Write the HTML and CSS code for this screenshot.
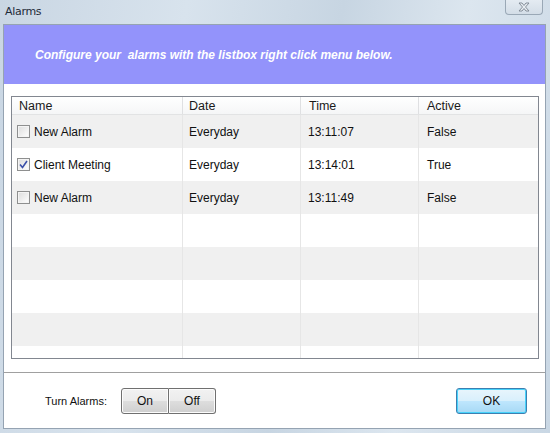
FILE: index.html
```html
<!DOCTYPE html>
<html>
<head>
<meta charset="utf-8">
<link rel="stylesheet" href="styles.css">
</head>
<body>
<div class="window">
  <div class="titlebar">
    <span class="title">Alarms</span>
    <div class="close">
      <svg width="14" height="10" viewBox="0 0 14 10"><path d="M2 1 L5 1 L7 3.5 L9 1 L12 1 L8.5 5 L12 9 L9 9 L7 6.5 L5 9 L2 9 L5.5 5 Z" fill="#e9eef3" stroke="#7a8490" stroke-width="0.9" stroke-linejoin="round"/></svg>
    </div>
  </div>
  <div class="client">
    <div class="banner">Configure your&nbsp; alarms with the listbox right click menu below.</div>
    <div class="listarea">
      <div class="list">
        <div class="row head">
          <div class="cell c1">Name</div>
          <div class="cell c2">Date</div>
          <div class="cell c3">Time</div>
          <div class="cell c4">Active</div>
        </div>
        <div class="row alt">
          <div class="cell c1"><span class="cb"></span>New Alarm</div>
          <div class="cell c2">Everyday</div>
          <div class="cell c3">13:11:07</div>
          <div class="cell c4">False</div>
        </div>
        <div class="row">
          <div class="cell c1"><span class="cb checked"><svg width="9" height="9" viewBox="0 0 9 9"><path d="M1 4.5 L3.5 7.5 L8 1" fill="none" stroke="#3a4fa8" stroke-width="1.6"/></svg></span>Client Meeting</div>
          <div class="cell c2">Everyday</div>
          <div class="cell c3">13:14:01</div>
          <div class="cell c4">True</div>
        </div>
        <div class="row alt">
          <div class="cell c1"><span class="cb"></span>New Alarm</div>
          <div class="cell c2">Everyday</div>
          <div class="cell c3">13:11:49</div>
          <div class="cell c4">False</div>
        </div>
        <div class="row"><div class="cell c1"></div><div class="cell c2"></div><div class="cell c3"></div><div class="cell c4"></div></div>
        <div class="row alt"><div class="cell c1"></div><div class="cell c2"></div><div class="cell c3"></div><div class="cell c4"></div></div>
        <div class="row"><div class="cell c1"></div><div class="cell c2"></div><div class="cell c3"></div><div class="cell c4"></div></div>
        <div class="row alt"><div class="cell c1"></div><div class="cell c2"></div><div class="cell c3"></div><div class="cell c4"></div></div>
        <div class="row last"><div class="cell c1"></div><div class="cell c2"></div><div class="cell c3"></div><div class="cell c4"></div></div>
      </div>
    </div>
    <div class="footer">
      <span class="label">Turn Alarms:</span>
      <div class="seg">
        <button class="btn on">On</button>
        <button class="btn off">Off</button>
      </div>
      <div class="spacer"></div>
      <button class="btn ok">OK</button>
    </div>
  </div>
</div>
</body>
</html>
```

FILE: styles.css
```css
html, body {
  margin: 0;
  padding: 0;
}
body {
  width: 550px;
  height: 433px;
  overflow: hidden;
  font-family: "Liberation Sans", Arial, sans-serif;
}
.window {
  width: 550px;
  height: 433px;
  background: linear-gradient(100deg, #c9d6e3 0%, #d8e3ed 30%, #c7d5e2 55%, #dce6ef 75%, #c9d7e4 100%);
  display: flex;
  flex-direction: column;
  box-sizing: border-box;
}
.titlebar {
  height: 24px;
  display: flex;
  align-items: flex-start;
  justify-content: space-between;
  flex-shrink: 0;
}
.title {
  font-family: "DejaVu Sans", sans-serif;
  font-size: 11px;
  color: #1e2a38;
  padding: 5px 0 0 5px;
  letter-spacing: -0.3px;
}
.close {
  width: 38px;
  height: 15px;
  margin-right: 7px;
  box-sizing: border-box;
  border: 1px solid #9aa8b6;
  border-top: none;
  border-radius: 0 0 4px 4px;
  background: linear-gradient(#e4ebf2, #d3dde7);
  display: flex;
  align-items: center;
  justify-content: center;
}
.client {
  margin: 0 4px 0 3px;
  height: 405px;
  box-sizing: border-box;
  border: 1px solid #95a3b2;
  background: #ffffff;
  display: flex;
  flex-direction: column;
}
.banner {
  height: 59px;
  background: #9393fb;
  color: #ffffff;
  font-style: italic;
  font-weight: bold;
  font-size: 12px;
  display: flex;
  align-items: center;
  padding-left: 31px;
  padding-top: 1px;
  box-sizing: border-box;
  flex-shrink: 0;
}
.listarea {
  padding: 12px 6px 0 7px;
}
.list {
  height: 263px;
  border: 1px solid #828790;
  box-sizing: border-box;
  overflow: hidden;
  display: flex;
  flex-direction: column;
}
.row {
  display: flex;
  height: 33px;
  flex-shrink: 0;
  font-size: 12px;
  color: #111;
}
.row.alt {
  background: #f0f0f0;
}
.row.head {
  height: 17px;
  background: linear-gradient(#ffffff, #f5f6f7);
  border-bottom: 1px solid #e2e3e4;
  font-size: 12.5px;
  color: #1a1a1a;
}
.cell {
  display: flex;
  align-items: center;
  box-sizing: border-box;
  border-right: 1px solid #e6e6e6;
}
.row.head .cell {
  border-right-color: #dfe0e2;
}
.c1 { width: 171px; padding-left: 5px; }
.c2 { width: 118px; padding-left: 6px; }
.c3 { width: 118px; padding-left: 7px; }
.c4 { flex: 1; padding-left: 8px; border-right: none; }
.row.head .c1 { padding-left: 7px; }
.row.head .c2 { padding-left: 6px; }
.row.head .c3 { padding-left: 8px; }
.cb {
  width: 13px;
  height: 13px;
  box-sizing: border-box;
  border: 1px solid #8e8f8f;
  background: linear-gradient(135deg, #dcdcdc, #ffffff);
  margin-right: 4px;
  display: inline-flex;
  align-items: center;
  justify-content: center;
  box-shadow: inset 0 0 0 1px #f4f4f4;
}
.footer {
  margin-top: 13px;
  border-top: 1px solid #a0a0a0;
  flex: 1;
  display: flex;
  align-items: center;
  padding: 0 18px 0 41px;
}
.label {
  font-size: 11px;
  color: #111;
  margin-right: 14px;
}
.seg {
  display: flex;
}
.btn {
  font-family: "Liberation Sans", Arial, sans-serif;
  font-size: 12px;
  color: #111;
  height: 26px;
  box-sizing: border-box;
  border: 1px solid #707070;
  background: linear-gradient(#f2f2f2 0%, #ebebeb 48%, #dddddd 52%, #cfcfcf 100%);
  padding: 0;
  margin: 0;
  box-shadow: inset 0 0 0 1px #fcfcfc;
}
.btn.on {
  width: 48px;
  border-radius: 3px 0 0 3px;
}
.btn.off {
  width: 47px;
  border-left: none;
  border-radius: 0 3px 3px 0;
}
.spacer { flex: 1; }
.btn.ok {
  width: 71px;
  border-color: #3c7fb1;
  border-radius: 3px;
  background: linear-gradient(#e8f5fc 0%, #d9f0fc 48%, #bee6fd 52%, #a7d9f5 100%);
  box-shadow: inset 0 0 0 1px #48d3fb;
}
```
